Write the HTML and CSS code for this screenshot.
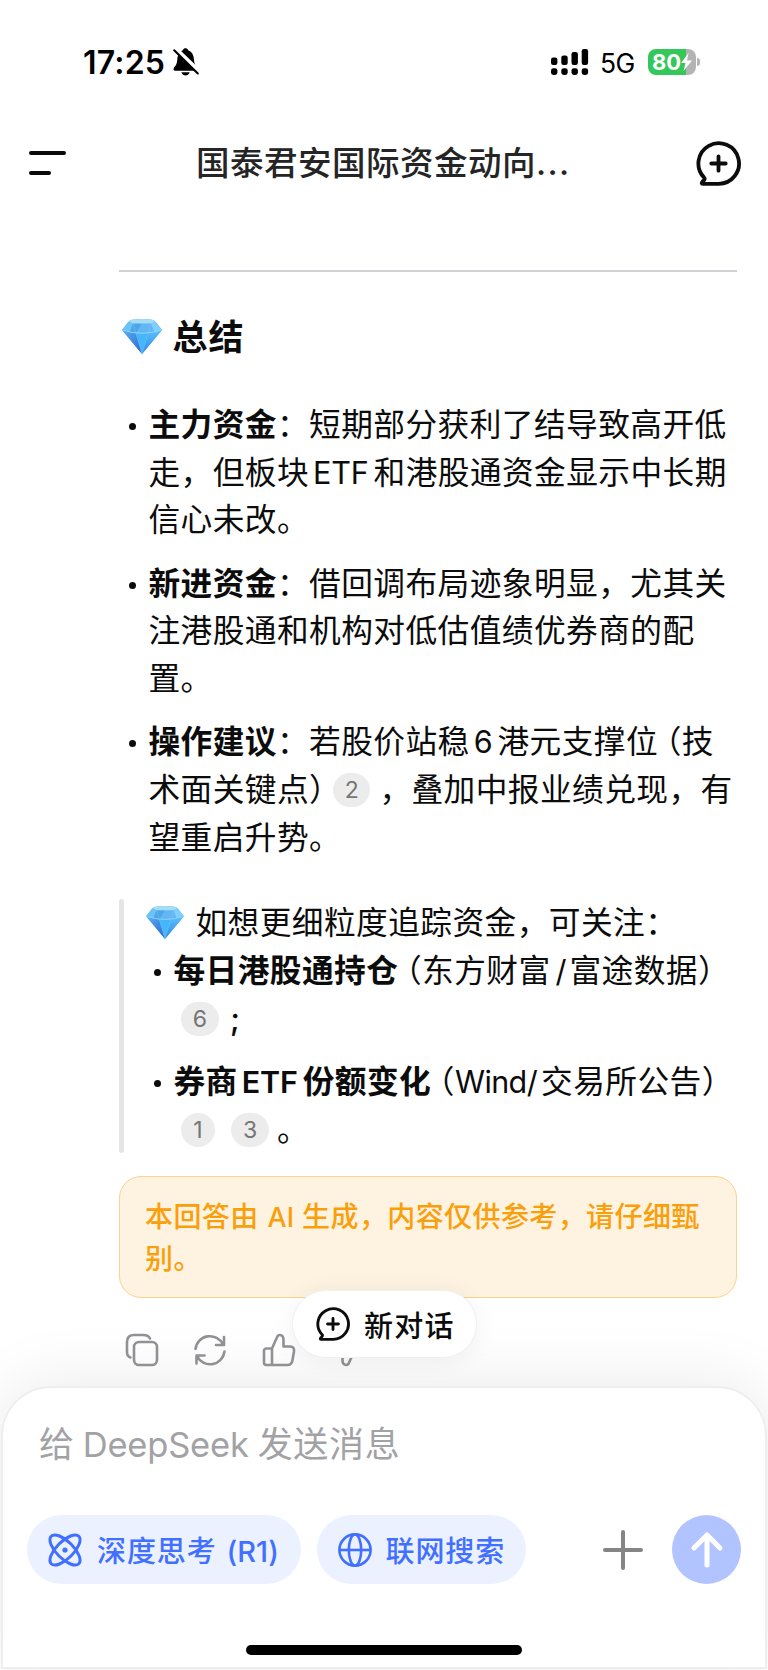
FILE: index.html
```html
<!DOCTYPE html>
<html lang="zh-CN">
<head>
<meta charset="utf-8">
<title>国泰君安国际资金动向</title>
<link rel="stylesheet" href="styles.css">
</head>
<body>
<svg class="defs" width="0" height="0">
  <linearGradient id="gem-left" x1="0" y1="0" x2="1" y2="1"><stop offset="0" stop-color="#58b4f4"/><stop offset="1" stop-color="#2b62cf"/></linearGradient>
  <linearGradient id="gem-right" x1="0" y1="0" x2="0" y2="1"><stop offset="0" stop-color="#58c2fb"/><stop offset="1" stop-color="#3487e8"/></linearGradient>
  <symbol id="gem" viewBox="0 0 40 35">
    <path d="M0 11 6 3.2Q7.500 1 10 .8Q20-.8 30 .8Q32.500 1 34 3.200L40 11 20 35Z" fill="#4ba9f1"/>
    <path d="M0 11 14 14.500 20 35Z" fill="url(#gem-left)"/>
    <path d="M14 14.500H26L20 35Z" fill="#46b6fb"/>
    <path d="M26 14.500 40 11 20 35Z" fill="url(#gem-right)"/>
    <path d="M0 11 7 2.500 11 4.500 8 13Z" fill="#69c3f7"/>
    <path d="M11 4.500 20 4 14 14.500 8 13Z" fill="#4ea5e8"/>
    <path d="M20 4 29 4.500 32 13 26 14.500H14Z" fill="#62b6f3"/>
    <path d="M29 4.500 33 2.500 40 11 32 13Z" fill="#80cefb"/>
    <path d="M7 2.500Q8 1 10 .8Q20-.8 30 .8Q32 1 33 2.500L29 4.500H11Z" fill="#a3def5"/>
    <path d="M0 11Q20 17.500 40 11" fill="none" stroke="#8fd9fc" stroke-width=".9"/>
    <path d="M11 4.500 14 14.500 20 35 26 14.500 29 4.500" fill="none" stroke="#7accf5" stroke-width=".6" opacity=".7"/>
  </symbol>
  <symbol id="chat-plus" viewBox="0 0 45 45">
    <path d="M22.500 42.800A20.300 20.300 0 1 0 8.200 36.700Q9.600 38.200 6.500 40.600Q4.700 42.800 7 42.800Z" fill="none" stroke="currentColor" stroke-width="3.800" stroke-linejoin="round"/>
    <path d="M22.500 15.300V29.700M15.300 22.500H29.700" fill="none" stroke="currentColor" stroke-width="3.800" stroke-linecap="round"/>
  </symbol>
</svg>
<div class="screen">
  <div class="status">
    <span class="time">17:25</span>
    <svg class="bell" viewBox="0 0 26 28">
      <path d="M1 19.500C3 17.500 4 15.500 4.300 11.500C4.800 6 7 3.500 9.500 2.500C10.300.8 11.500.2 12.500.2S14.700.8 15.500 2.500C19 3.800 20.700 7 21 11.500C21.300 15.500 22 17 24.300 19.500Q25.500 22.800 23 22.800H2.200Q-.3 22.800 1 19.500Z"/>
      <path d="M8.300 24.200H16.700Q15.300 27.500 12.500 27.500T8.300 24.200Z"/>
      <path d="M2.500 1 26.500 24" stroke="#fff" stroke-width="4.600"/>
      <path d="M1.200 2.300 24.800 25.500" stroke="#000" stroke-width="2.100" stroke-linecap="round"/>
    </svg>
    <svg class="signal" viewBox="0 0 38 26">
      <rect x="0" y="8.500" width="6.400" height="7.500" rx="2.200"/><rect x="10.300" y="6.500" width="6.400" height="9.500" rx="2.200"/><rect x="20.500" y="3" width="6.400" height="13" rx="2.200"/><rect x="30.700" y="0" width="6.400" height="16" rx="2.200"/>
      <rect x="0" y="19.200" width="6.400" height="6.800" rx="2.400"/><rect x="10.300" y="19.200" width="6.400" height="6.800" rx="2.400"/><rect x="20.500" y="19.200" width="6.400" height="6.800" rx="2.400"/><rect x="30.700" y="19.200" width="6.400" height="6.800" rx="2.400"/>
    </svg>
    <span class="net">5G</span>
    <div class="battery">
      <span class="level">80</span>
      <svg class="bolt" viewBox="0 0 11 18"><path d="M7.500 0 0 10H4.500L2.500 18 11 7.500H6Z" fill="#fff"/></svg>
    </div>
    <span class="nub"></span>
  </div>
  <header class="topbar">
    <div class="menu"><i></i><i class="short"></i></div>
    <h1 class="title">国泰君安国际资金动向<span class="dots">...</span></h1>
    <svg class="newchat"><use href="#chat-plus"/></svg>
  </header>
  <main class="answer">
    <hr class="rule">
    <h2 class="heading"><svg class="gem"><use href="#gem"/></svg><span>总结</span></h2>
    <ul class="list">
      <li><p><b>主力资金</b>：短期部分获利了结导致高开低</p><p>走，但板块<span class="lat">ETF</span>和港股通资金显示中长期</p><p>信心未改。</p></li>
      <li><p><b>新进资金</b>：借回调布局迹象明显，尤其关</p><p>注港股通和机构对低估值绩优券商的配</p><p>置。</p></li>
      <li><p><b>操作建议</b>：若股价站稳<span class="lat">6</span>港元支撑位<span class="open">（</span>技</p><p>术面关键点<span class="close">）</span><span class="cite">2</span>，叠加中报业绩兑现，有</p><p>望重启升势。</p></li>
    </ul>
    <blockquote class="quote">
      <p class="lead"><svg class="gem small"><use href="#gem"/></svg>如想更细粒度追踪资金，可关注：</p>
      <ul class="list nested">
        <li><p><b>每日港股通持仓</b><span class="open">（</span>东方财富<span class="lat slash">/</span>富途数据<span class="close">）</span></p><p class="cites"><span class="cite">6</span><span class="semi">;</span></p></li>
        <li><p><b>券商<span class="lat etf">ETF</span>份额变化</b><span class="open">（</span><span class="wind">Wind/</span>交易所公告<span class="close">）</span></p><p class="cites"><span class="cite one">1</span><span class="cite three">3</span>。</p></li>
      </ul>
    </blockquote>
    <div class="notice"><p>本回答由<span class="ai">AI</span>生成，内容仅供参考，请仔细甄</p><p>别。</p></div>
    <div class="actions">
      <svg viewBox="0 0 34 34"><rect x="9" y="9" width="23" height="23" rx="5"/><path d="M5.500 24.500Q2 23.500 2 19V9Q2 2 9 2H18Q23.500 2 25 5.500"/></svg>
      <svg viewBox="0 0 34 34"><path d="M2.500 16A14.500 14.500 0 0 1 30 11.500M31 4V12H23M31.500 18.500A14.500 14.500 0 0 1 4 23M3.500 30.500V22.500H11.500"/></svg>
      <svg viewBox="0 0 34 34"><path d="M10 15.500H4.500Q2 15.500 2 18V29.500Q2 32 4.500 32H25.500Q29.500 32 30.300 28L32 18.500Q32.600 13.500 28 13.500H21.500V7Q21.500 2 17.800 2Q15.800 2 15 4.200L10 15.500V32"/></svg>
      <svg class="down" viewBox="0 0 34 34"><path d="M10 15.500H4.500Q2 15.500 2 18V29.500Q2 32 4.500 32H25.500Q29.500 32 30.300 28L32 18.500Q32.600 13.500 28 13.500H21.500V7Q21.500 2 17.800 2Q15.800 2 15 4.200L10 15.500V32"/></svg>
    </div>
    <div class="float"><svg><use href="#chat-plus"/></svg><span>新对话</span></div>
  </main>
  <footer class="composer">
    <div class="placeholder">给<span>DeepSeek</span>发送消息</div>
    <div class="tools">
      <div class="chip think">
        <svg viewBox="0 0 34 34" fill="none" stroke="currentColor" stroke-width="3"><ellipse cx="17" cy="17" rx="19.500" ry="8.500" transform="rotate(45 17 17)"/><ellipse cx="17" cy="17" rx="19.500" ry="8.500" transform="rotate(-45 17 17)"/><circle cx="17" cy="17" r="2.600" fill="currentColor" stroke="none"/></svg>
        <span>深度思考<em>(R1)</em></span>
      </div>
      <div class="chip web">
        <svg viewBox="0 0 34 34" fill="none" stroke="currentColor" stroke-width="2.600"><circle cx="17" cy="17" r="15.600"/><ellipse cx="17" cy="17" rx="6.200" ry="15.600"/><path d="M1.400 17H32.600"/></svg>
        <span>联网搜索</span>
      </div>
      <svg class="plus" viewBox="0 0 40 40"><path d="M20 2V38M2 20H38"/></svg>
      <div class="send"><svg viewBox="0 0 32 36"><path d="M16 33V3M3 16 16 3 29 16"/></svg></div>
    </div>
    <div class="home"></div>
  </footer>
</div>
</body>
</html>
```
FILE: styles.css
```css
* { box-sizing: border-box; margin: 0; padding: 0; }
body {
  width: 768px; height: 1670px; overflow: hidden; background: #fff; color: #0c0c0c;
  font-family: Inter, "Noto Sans CJK SC", sans-serif;
}
svg { display: block; flex: none; overflow: visible; }
.defs { position: absolute; }
.screen { display: flex; flex-direction: column; height: 1670px; overflow: hidden; }

.status { display: flex; align-items: center; height: 76px; margin-top: 24px; padding: 0 68px 0 83px; color: #000; flex: none; }
.time { width: 90px; padding-top: 1px; font-size: 32px; font-weight: 600; line-height: 40px; letter-spacing: .2px; white-space: nowrap; }
.bell { width: 26px; height: 28px; }
.signal { width: 38px; height: 26px; margin-left: auto; }
.net { width: 35px; margin: 2px 13px 0 11px; font-size: 26.500px; line-height: 32px; letter-spacing: -.5px; }
.battery {
  display: flex; align-items: center; width: 48px; height: 26px; padding-left: 4px; border-radius: 8px;
  background: linear-gradient(90deg, #34c759 0 38px, #b3b3b3 38px);
}
.level { width: 29px; color: #fff; font-size: 22px; font-weight: 700; line-height: 26px; }
.bolt { width: 11px; height: 18px; }
.nub { width: 3px; height: 8px; margin-left: 1px; border-radius: 0 4px 4px 0; background: #b3b3b3; }

.topbar { display: flex; align-items: center; height: 126px; padding: 0 27px 0 29px; flex: none; }
.menu { display: flex; flex-direction: column; gap: 16px; width: 37px; }
.menu i { height: 4px; border-radius: 2px; background: #0a0a0a; }
.menu .short { width: 21.500px; }
.title { flex: 1; padding-left: 130px; color: #252525; font-size: 33.500px; font-weight: 500; line-height: 48px; letter-spacing: .5px; white-space: nowrap; }
.dots { letter-spacing: 1.300px; }
.newchat { width: 45px; height: 45px; }

.answer { position: relative; height: 1160px; padding: 44px 31px 0 118.500px; flex: none; }
.rule { height: 2px; border: 0; background: #d0d0d5; }
.heading { display: flex; align-items: center; gap: 11px; height: 48px; margin: 41px 0 40px; padding-left: 3px; font-size: 35px; font-weight: 600; letter-spacing: 1px; }
.heading span { padding-bottom: 5px; }
.gem { width: 40px; height: 35px; }
.heading .gem { margin-bottom: 1px; }
.list { list-style: none; padding-left: 30px; font-size: 31.700px; letter-spacing: .430px; }
.list p, .lead { display: flex; align-items: center; height: 47.700px; line-height: 47.700px; white-space: pre; }
.list li { position: relative; }
.list li + li { margin-top: 15.600px; }
.list li::before { content: ""; position: absolute; left: -20px; top: 22px; width: 7px; height: 7px; border-radius: 50%; background: #0c0c0c; }
.list b { font-weight: 600; }
.lat { margin: 0 5px 0 4px; font-size: 30.500px; letter-spacing: -.2px; }
.open { margin-left: 7.500px; font-feature-settings: "halt"; }
.close { font-feature-settings: "halt"; }
.cite {
  width: 37px; height: 34px; margin: 0 9px 0 8px; border-radius: 17px; background: #ececec; color: #757575;
  font-size: 23px; line-height: 34px; letter-spacing: 0; text-align: center;
}
.quote { margin-top: 37px; padding-left: 26px; position: relative; font-size: 31.700px; }
.quote::before { content: ""; position: absolute; left: 0; top: 1px; width: 5.500px; height: 254px; border-radius: 3px; background: #e5e5e5; }
.lead { letter-spacing: .430px; padding: 2px 0 0 1px; }
.gem.small { width: 38px; height: 33px; margin: 0 12px 2px 0; }
.nested { padding: 1px 0 0 29px; }
.nested .slash { margin: 0 3px 0 5px; }
.wind { font-size: 30.500px; letter-spacing: -.6px; margin-right: 4px; }
.cites .cite:first-child { margin-left: 7.500px; width: 38px; }
.cites .one:first-child { width: 34px; margin-right: 16px; }
.cites .three { margin-left: 0; width: 38px; margin-right: 8px; }
.semi { margin-left: 2px; font-weight: 500; }

.notice {
  height: 122px; margin-top: 22.500px; padding: 19px 0 0 25.500px; border: 1.500px solid #fad292; border-radius: 22px;
  background: #fef2e0; color: #f99f0b; font-size: 28px; font-weight: 500; letter-spacing: .400px;
}
.notice p { height: 42px; line-height: 42px; white-space: nowrap; }
.ai { margin: 0 8px 0 9px; font-size: 27px; letter-spacing: 0; }
.actions { display: flex; gap: 34.500px; margin-top: 35px; padding-left: 6px; }
.actions svg { width: 34px; height: 34px; fill: none; stroke: #909194; stroke-width: 2.600; stroke-linecap: round; stroke-linejoin: round; }
.actions .down { transform: rotate(180deg); }
.float {
  position: absolute; left: 292px; top: 1064px; display: flex; align-items: center; gap: 14px; width: 185px; height: 68px;
  padding-left: 23px; border: 1.500px solid #f0f0f0; border-radius: 34px; background: #fff; box-shadow: 0 2px 24px rgba(0,0,0,.06);
  font-size: 29px; font-weight: 500; letter-spacing: 1.200px; white-space: nowrap;
}
.float svg { width: 34px; height: 34px; }

.composer {
  display: flex; flex-direction: column; height: 283px; margin: 0 1px; padding: 31px 24px 0; border: 2px solid #eee;
  border-radius: 50px 50px 0 0; background: #fff; box-shadow: 0 0 70px rgba(0,0,0,.09); flex: none;
}
.placeholder { height: 50px; padding-left: 12px; color: #a2a2a5; font-size: 35px; line-height: 50px; letter-spacing: .700px; white-space: nowrap; }
.placeholder span { margin: 0 9px 0 8px; font-size: 34.500px; letter-spacing: -.2px; }
.tools { display: flex; align-items: center; height: 69px; margin-top: 46px; }
.chip { display: flex; align-items: center; height: 69px; border-radius: 35px; background: #ebf1ff; color: #416fff; font-size: 29px; font-weight: 500; letter-spacing: .900px; white-space: nowrap; }
.chip svg { width: 34px; height: 34px; }
.chip span { padding-bottom: 2px; }
.think { width: 274px; padding-left: 21px; gap: 15px; }
.chip em { margin-left: 10px; font-size: 29px; font-style: normal; letter-spacing: 0; }
.web { width: 209px; margin-left: 16px; padding-left: 20.500px; gap: 14px; }
.plus { width: 40px; height: 40px; margin-left: 77px; stroke: #858585; stroke-width: 4; stroke-linecap: round; }
.send { display: flex; align-items: center; justify-content: center; width: 69px; height: 69px; margin-left: 29px; border-radius: 50%; background: #b2c4ff; flex: none; }
.send svg { width: 32px; height: 36px; fill: none; stroke: #fff; stroke-width: 5; stroke-linecap: round; stroke-linejoin: round; }
.home { width: 276px; height: 9.500px; margin: 61px 0 0 219px; border-radius: 5px; background: #000; }
```
